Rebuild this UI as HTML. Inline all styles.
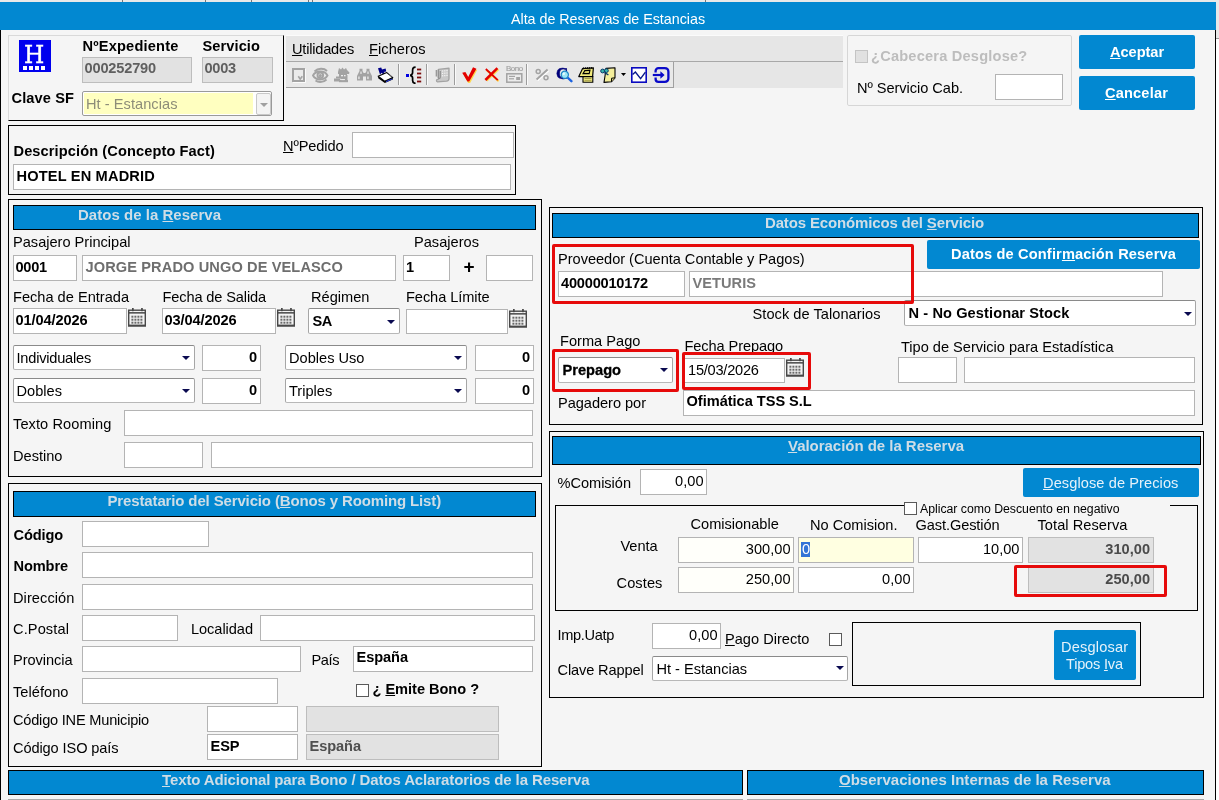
<!DOCTYPE html>
<html lang="es"><head><meta charset="utf-8"><title>Alta de Reservas de Estancias</title>
<style>
html,body{margin:0;padding:0}
body{width:1219px;height:800px;overflow:hidden;background:#f5f5f5;position:relative;font-family:"Liberation Sans",sans-serif;font-size:14.6px}
#w{position:absolute;left:0;top:0;width:1219px;height:800px;overflow:hidden;will-change:transform}
#w div,#w svg,#w span.t{position:absolute;box-sizing:border-box}
span.t{white-space:pre;line-height:20px;height:20px}
u{text-decoration:underline;text-underline-offset:0.6px;text-decoration-thickness:1px}
.in{background:#fff;border:1px solid #b4b4b4}
.dis{background:#e2e2e2;border-color:#bdbdbd}
.cb{border-color:#8a8a8a #a6a6a6 #b8b8b8 #a6a6a6;border-radius:2px}
</style></head><body>

<div id="w">
<div style="left:0px;top:0px;width:1219px;height:2px;background:#e9e9e9"></div>
<div style="left:122px;top:0px;width:1px;height:2px;background:#777"></div>
<div style="left:205px;top:0px;width:1px;height:2px;background:#777"></div>
<div style="left:251px;top:0px;width:1px;height:2px;background:#777"></div>
<div style="left:308px;top:0px;width:1px;height:2px;background:#777"></div>
<div style="left:312px;top:0px;width:1px;height:2px;background:#777"></div>
<div style="left:705px;top:0px;width:1px;height:2px;background:#777"></div>
<div style="left:0px;top:2px;width:1216px;height:28px;background:#0288d1"></div>
<div style="left:1216px;top:2px;width:3px;height:36px;background:#e8e8e8"></div>
<div style="left:1216px;top:38px;width:3px;height:762px;background:#fff"></div>
<div style="left:1216px;top:38px;width:3px;height:1px;background:#9a9a9a"></div>
<div style="left:0px;top:30px;width:1px;height:770px;background:#000"></div>
<div style="left:1215px;top:30px;width:1px;height:770px;background:#000"></div>
<div style="left:8px;top:35px;width:276px;height:86px;border:1px solid #d9d9d9;border-right-color:#000;border-bottom-color:#000"></div>
<div style="left:19px;top:40px;width:32px;height:32px;background:#0000ee"></div>
<div style="left:23px;top:66px;width:4px;height:4px;background:#fff"></div>
<div style="left:29px;top:66px;width:4px;height:4px;background:#fff"></div>
<div style="left:35px;top:66px;width:4px;height:4px;background:#fff"></div>
<div style="left:41px;top:66px;width:4px;height:4px;background:#fff"></div>
<div class="in dis" style="left:82px;top:57px;width:110px;height:26px"></div>
<div class="in dis" style="left:202px;top:57px;width:71px;height:26px"></div>
<div style="left:82px;top:91px;width:190px;height:25px;background:#fff;border:1px solid #9a9a9a;border-radius:2px"></div>
<div style="left:84px;top:93px;width:169px;height:21px;background:#ffffc0"></div>
<div style="left:256px;top:93px;width:15px;height:22px;background:#f4f4f4;border:1px solid #c8c8c8;border-radius:2px"></div>
<svg style="left:260px;top:103px" width="8" height="4" viewBox="0 0 8 4"><path d="M0 0H8L4 4Z" fill="#a0a0a0"/></svg>
<div style="left:286px;top:35px;width:557px;height:53px;background:#e6e6e6"></div>
<div style="left:286px;top:35px;width:557px;height:1px;background:#fbfbfb"></div>
<div style="left:286px;top:61px;width:557px;height:1px;background:#a8a8a8"></div>
<div style="left:286px;top:62px;width:388px;height:26px;background:#e9e9e9;border-right:1px solid #a0a0a0;border-bottom:1px solid #a0a0a0"></div>
<svg style="left:292px;top:68px" width="14" height="15" viewBox="0 0 14 15"><rect x="1.9" y="1.9" width="11" height="12" fill="#ebebeb" stroke="#ffffff" stroke-width="1.8"/><rect x="1" y="1" width="11" height="12" fill="#ebebeb" stroke="#a3a3a3" stroke-width="2"/><path d="M6.3 8.3L8.2 11.2L10.3 8.3" stroke="#a3a3a3" stroke-width="1.6" fill="none"/></svg>
<svg style="left:312px;top:67px" width="17" height="16" viewBox="0 0 17 16"><g fill="none" stroke="#a3a3a3" stroke-width="1.9"><path d="M1 8.5C3.5 3.5 12.5 3 15.5 8.5C12.5 13.5 4 14 1 8.5Z"/><path d="M2.5 4.5C6 1 12 1 15 4"/><path d="M3.5 13.5C7 16 12 15 14.5 12.5"/><circle cx="8.3" cy="8.3" r="2.8"/></g><circle cx="8.3" cy="8.6" r="1.6" fill="#a3a3a3"/></svg>
<svg style="left:334px;top:67px" width="17" height="16" viewBox="0 0 17 16"><g fill="#a3a3a3"><path d="M4 5L5 1L7 2.5L8.5 0.5L10 2.5L12 1L13 3L15.5 5.5L15 7H4Z"/><rect x="5" y="7" width="8" height="3" /><rect x="2" y="9.5" width="9" height="2"/><rect x="0" y="11.5" width="6" height="3"/><rect x="5" y="13" width="9" height="2.2"/><rect x="11" y="8" width="2.5" height="7"/><rect x="6.5" y="10.8" width="5" height="1.4"/></g><rect x="7" y="8" width="2" height="1.3" fill="#eee"/><rect x="10" y="8" width="1.6" height="1.3" fill="#eee"/><rect x="7.3" y="12.1" width="3.4" height="1" fill="#eee"/></svg>
<svg style="left:357px;top:68px" width="15" height="13" viewBox="0 0 15 13"><g fill="#a3a3a3"><path d="M0 12.5V8L2.5 3V0.8H5.5V3L6.6 5H8.4L9.5 3V0.8H12.5V3L15 8V12.5H9V8.5H6V12.5Z"/></g><g fill="#ececec"><rect x="1.3" y="8.5" width="1.3" height="2.6"/><rect x="10.3" y="8.5" width="1.3" height="2.6"/><rect x="3.4" y="3.5" width="1.2" height="2.4"/><rect x="10.4" y="3.5" width="1.2" height="2.4"/></g></svg>
<svg style="left:377px;top:67px" width="17" height="16" viewBox="0 0 17 16"><path d="M1 1.2L4.2 0.6L5 2.4L8.6 1.4L9.3 4.4L6.6 5L10.5 8.3L8.4 9.3L4.6 5.7L3 7.4Z" fill="#00008a"/><path d="M1.2 9.2L9.8 5.6L15.8 10.6L7.6 14.2Z" fill="#fff" stroke="#000" stroke-width="1.1" stroke-linejoin="round"/><path d="M1.2 9.2L7.6 14.2L15.8 10.6V12.6L7.8 16L1.2 11.2Z" fill="#000"/><path d="M9 14.1L15.3 11.4V12.5L9 15.2Z" fill="#2a3fd8"/><path d="M12.3 7.8L14.6 9.8" stroke="#888" stroke-width="1"/></svg>
<div style="left:398px;top:64px;width:1px;height:21px;background:#9c9c9c"></div><div style="left:399px;top:64px;width:1px;height:21px;background:#fafafa"></div>
<svg style="left:405px;top:66px" width="18" height="18" viewBox="0 0 18 18"><rect x="1" y="8" width="3" height="3" fill="#0000e0"/><path d="M10.6 1.2C8 1.2 7.6 2.6 7.6 4.4V6.6C7.6 8 7 8.9 5.2 9.3C7 9.7 7.6 10.6 7.6 12V14.4C7.6 16.1 8 17.3 10.6 17.3" fill="none" stroke="#000" stroke-width="1.7"/><g fill="#7a0c0c"><rect x="12" y="2.6" width="4.2" height="1.8"/><rect x="12" y="6.6" width="4.2" height="1.8"/><rect x="12" y="10.6" width="4.2" height="1.8"/><rect x="12" y="14.6" width="4.2" height="1.8"/></g></svg>
<div style="left:426px;top:64px;width:1px;height:21px;background:#9c9c9c"></div><div style="left:427px;top:64px;width:1px;height:21px;background:#fafafa"></div>
<svg style="left:435px;top:67px" width="16" height="16" viewBox="0 0 16 16"><path d="M3.5 2.4L14 1.2V11.5C14 13 13 14 11.5 14.2L2.5 14.8C1 14.5 1.2 12.5 2.6 12.4L3.5 12.2Z" fill="#c9c9c9" stroke="#a3a3a3" stroke-width="1.3" stroke-linejoin="round"/><path d="M1.3 3V9.5M3.2 2.6V10.2C3.2 11.8 5.3 11.8 5.3 10.2V4" fill="none" stroke="#8f8f8f" stroke-width="1.2"/><g fill="#f4f4f4"><rect x="7" y="3.4" width="1.2" height="1.2"/><rect x="9.2" y="3.2" width="1.2" height="1.2"/><rect x="11.4" y="3" width="1.2" height="1.2"/><rect x="7" y="5.8" width="1.2" height="1.2"/><rect x="9.2" y="5.6" width="1.2" height="1.2"/><rect x="11.4" y="5.4" width="1.2" height="1.2"/><rect x="7" y="8.2" width="1.2" height="1.2"/><rect x="9.2" y="8" width="1.2" height="1.2"/><rect x="11.4" y="7.8" width="1.2" height="1.2"/></g></svg>
<div style="left:454px;top:64px;width:1px;height:21px;background:#9c9c9c"></div><div style="left:455px;top:64px;width:1px;height:21px;background:#fafafa"></div>
<svg style="left:461px;top:66px" width="17" height="17" viewBox="0 0 17 17"><path d="M1.8 7.2L4.6 6.6L7.4 11.8L12.2 1.6L15.6 3.4L8.6 16.2H6.6Z" fill="#ffd84a" transform="translate(0.5,0.7)"/><path d="M1.2 6.8L4.4 6L7.2 11L12 1.2L15.4 2.8L8.2 15.6H6.4Z" fill="#e30000"/></svg>
<svg style="left:484px;top:67px" width="16" height="15" viewBox="0 0 16 15"><path d="M2 13.2L13.8 1.6M2.2 2.6L14 13.6" stroke="#ffd84a" stroke-width="2" transform="translate(0.6,0.6)"/><path d="M1.4 13L13.4 1.2" stroke="#e30000" stroke-width="2.5"/><path d="M1.8 2L13.8 13.2" stroke="#e30000" stroke-width="1.8"/></svg>
<span class="t" style="left:506px;top:64px;font-size:8px;letter-spacing:-0.5px;line-height:10px;height:10px;color:#a3a3a3;-webkit-text-stroke:0.2px #a3a3a3">Bono</span>
<svg style="left:506px;top:73px" width="17" height="10" viewBox="0 0 17 10"><rect x="0.8" y="0.8" width="15" height="8.4" fill="#ebebeb" stroke="#a3a3a3" stroke-width="1.5"/><rect x="3" y="2.8" width="6" height="1.2" fill="#a3a3a3"/><rect x="3" y="5.2" width="5" height="1.2" fill="#a3a3a3"/><rect x="10.2" y="4" width="3.8" height="3" fill="#a3a3a3"/></svg>
<div style="left:526px;top:64px;width:1px;height:21px;background:#9c9c9c"></div><div style="left:527px;top:64px;width:1px;height:21px;background:#fafafa"></div>
<svg style="left:535px;top:68px" width="15" height="13" viewBox="0 0 15 13"><path d="M1.6 11.6L12.6 1.6" stroke="#fff" stroke-width="2" transform="translate(0.8,0.8)"/><path d="M1.6 11.6L12.6 1.6" stroke="#a3a3a3" stroke-width="2"/><circle cx="3.2" cy="3.4" r="2" fill="none" stroke="#a3a3a3" stroke-width="1.5"/><circle cx="11" cy="9.8" r="2" fill="none" stroke="#a3a3a3" stroke-width="1.5"/></svg>
<span class="t" style="left:556px;top:64px;font-family:'Liberation Serif',serif;font-weight:bold;font-size:17px;line-height:20px;height:20px;color:#00007a;-webkit-text-stroke:0.5px #00007a">C</span>
<svg style="left:560px;top:70px" width="13" height="13" viewBox="0 0 13 13"><path d="M7 7L11.4 11.2" stroke="#1d63e0" stroke-width="2.4" stroke-linecap="round"/><circle cx="4.8" cy="4.8" r="3.6" fill="#9fe6f4" stroke="#1a86c8" stroke-width="1.2"/><circle cx="3.8" cy="3.8" r="1.2" fill="#e8fbff"/></svg>
<svg style="left:578px;top:67px" width="17" height="16" viewBox="0 0 17 16"><path d="M5 15.3V9.5H14.8V15.3Z" fill="#f4ee86" stroke="#000" stroke-width="1.1"/><path d="M6.5 11.5H13.5M6.5 13.3H13.5" stroke="#9a9440" stroke-width="0.9"/><path d="M4.6 1.6L15.4 0.8L14.6 9.6H0.8Z" fill="#f1ea7c" stroke="#000" stroke-width="1.2" stroke-linejoin="round"/><path d="M5.4 0.3V2.2M7.4 0.2V2M9.4 0.1V1.9M11.4 0V1.8M13.4 0V1.7" stroke="#000" stroke-width="0.9"/><path d="M6.8 3.6L12 3.2L11.2 6.6H5Z" fill="#d8d06a" stroke="#000" stroke-width="1.1"/></svg>
<svg style="left:600px;top:67px" width="17" height="16" viewBox="0 0 17 16"><path d="M6 1.4L15 0.8V10.8L11.4 14.8L4 15.4L5 9Z" fill="#f4ee9a" stroke="#000" stroke-width="1.1" stroke-linejoin="round"/><path d="M15 10.8L11.6 11.2L11.4 14.8" fill="#d9d27a" stroke="#000" stroke-width="1"/><circle cx="2.6" cy="4" r="1.9" fill="#39b8b0" stroke="#0a3a6a" stroke-width="1"/><circle cx="6.4" cy="3.6" r="1.9" fill="#39b8b0" stroke="#0a3a6a" stroke-width="1"/><path d="M4.4 5.4L8.4 8" stroke="#0a3a6a" stroke-width="1.4"/></svg>
<svg style="left:621px;top:73px" width="5" height="3" viewBox="0 0 5 3"><path d="M0 0H5L2.5 3Z" fill="#000"/></svg>
<svg style="left:631px;top:67px" width="16" height="16" viewBox="0 0 16 16"><rect x="0.8" y="0.8" width="14.4" height="14.4" fill="#fff" stroke="#0a0ac0" stroke-width="1.6"/><path d="M1.6 7.6L4.4 5L9.6 11.6L14.4 5.2" fill="none" stroke="#0a1a8a" stroke-width="1.4"/></svg>
<svg style="left:652px;top:67px" width="18" height="16" viewBox="0 0 18 16"><path d="M3.6 5.4V4C3.6 2.3 4.8 1.2 6.4 1.2H12.6C14.8 1.2 16.4 2.6 16.4 4.8V11.2C16.4 13.4 14.8 14.8 12.6 14.8H6.4C4.8 14.8 3.6 13.7 3.6 12V10.6" fill="none" stroke="#0a0ac8" stroke-width="2.3"/><path d="M0.8 8H11" stroke="#0a0ac8" stroke-width="2.2"/><path d="M8.4 4.2L12.6 8L8.4 11.8Z" fill="#0a0ac8"/></svg>
<div style="left:847px;top:35px;width:225px;height:71px;border:1px solid #d6d6d6;border-radius:2px"></div>
<div style="left:855px;top:50px;width:13px;height:13px;background:#e1e1e1;border:1px solid #c4c4c4"></div>
<div class="in" style="left:995px;top:74px;width:68px;height:26px"></div>
<div style="left:1079px;top:35px;width:116px;height:34px;background:#0288d1;border-radius:2px"></div>
<div style="left:1079px;top:76px;width:116px;height:34px;background:#0288d1;border-radius:2px"></div>
<div style="left:8px;top:125px;width:508px;height:70px;border:1px solid #000"></div>
<div class="in" style="left:352px;top:132px;width:162px;height:26px"></div>
<div class="in" style="left:13px;top:164px;width:498px;height:26px"></div>
<div style="left:8px;top:199px;width:534px;height:278px;border:1px solid #000"></div>
<div style="left:13px;top:205px;width:523px;height:25px;background:#0288d1;border:1px solid #000"></div>
<div class="in" style="left:13px;top:255px;width:64px;height:26px"></div>
<div class="in" style="left:82px;top:255px;width:314px;height:26px"></div>
<div class="in" style="left:403px;top:255px;width:47px;height:26px"></div>
<div class="in" style="left:486px;top:255px;width:47px;height:26px"></div>
<div class="in" style="left:13px;top:308px;width:114px;height:26px"></div>
<svg style="left:128px;top:308px" width="18" height="19" viewBox="0 0 18 19"><rect x="0.7" y="2.2" width="16.6" height="15.6" fill="#f4f4f4" stroke="#484848" stroke-width="1.4"/><rect x="1" y="4.1" width="16" height="1.5" fill="#484848"/><rect x="0" y="16.6" width="18" height="1.9" fill="#484848"/><rect x="4" y="0" width="1.7" height="3.2" fill="#484848"/><rect x="13.1" y="0" width="1.7" height="3.2" fill="#484848"/><g fill="#6a6a6a"><rect x="3.4" y="7.7" width="2" height="2"/><rect x="6.4" y="7.7" width="2" height="2"/><rect x="9.4" y="7.7" width="2" height="2"/><rect x="12.4" y="7.7" width="2" height="2"/><rect x="3.4" y="10.7" width="2" height="2"/><rect x="6.4" y="10.7" width="2" height="2"/><rect x="9.4" y="10.7" width="2" height="2"/><rect x="12.4" y="10.7" width="2" height="2"/><rect x="3.4" y="13.7" width="2" height="2"/><rect x="6.4" y="13.7" width="2" height="2"/><rect x="9.4" y="13.7" width="2" height="2"/><rect x="12.4" y="13.7" width="2" height="2"/></g></svg>
<div class="in" style="left:162px;top:308px;width:114px;height:26px"></div>
<svg style="left:277px;top:308px" width="18" height="19" viewBox="0 0 18 19"><rect x="0.7" y="2.2" width="16.6" height="15.6" fill="#f4f4f4" stroke="#484848" stroke-width="1.4"/><rect x="1" y="4.1" width="16" height="1.5" fill="#484848"/><rect x="0" y="16.6" width="18" height="1.9" fill="#484848"/><rect x="4" y="0" width="1.7" height="3.2" fill="#484848"/><rect x="13.1" y="0" width="1.7" height="3.2" fill="#484848"/><g fill="#6a6a6a"><rect x="3.4" y="7.7" width="2" height="2"/><rect x="6.4" y="7.7" width="2" height="2"/><rect x="9.4" y="7.7" width="2" height="2"/><rect x="12.4" y="7.7" width="2" height="2"/><rect x="3.4" y="10.7" width="2" height="2"/><rect x="6.4" y="10.7" width="2" height="2"/><rect x="9.4" y="10.7" width="2" height="2"/><rect x="12.4" y="10.7" width="2" height="2"/><rect x="3.4" y="13.7" width="2" height="2"/><rect x="6.4" y="13.7" width="2" height="2"/><rect x="9.4" y="13.7" width="2" height="2"/><rect x="12.4" y="13.7" width="2" height="2"/></g></svg>
<div class="in cb" style="left:308px;top:308px;width:92px;height:26px"></div>
<svg style="left:387px;top:320px" width="8" height="4" viewBox="0 0 8 4"><path d="M0 0H8L4 4Z" fill="#0a0a50"/></svg>
<div class="in" style="left:406px;top:309px;width:102px;height:25px"></div>
<svg style="left:509px;top:309px" width="18" height="19" viewBox="0 0 18 19"><rect x="0.7" y="2.2" width="16.6" height="15.6" fill="#f4f4f4" stroke="#484848" stroke-width="1.4"/><rect x="1" y="4.1" width="16" height="1.5" fill="#484848"/><rect x="0" y="16.6" width="18" height="1.9" fill="#484848"/><rect x="4" y="0" width="1.7" height="3.2" fill="#484848"/><rect x="13.1" y="0" width="1.7" height="3.2" fill="#484848"/><g fill="#6a6a6a"><rect x="3.4" y="7.7" width="2" height="2"/><rect x="6.4" y="7.7" width="2" height="2"/><rect x="9.4" y="7.7" width="2" height="2"/><rect x="12.4" y="7.7" width="2" height="2"/><rect x="3.4" y="10.7" width="2" height="2"/><rect x="6.4" y="10.7" width="2" height="2"/><rect x="9.4" y="10.7" width="2" height="2"/><rect x="12.4" y="10.7" width="2" height="2"/><rect x="3.4" y="13.7" width="2" height="2"/><rect x="6.4" y="13.7" width="2" height="2"/><rect x="9.4" y="13.7" width="2" height="2"/><rect x="12.4" y="13.7" width="2" height="2"/></g></svg>
<div class="in cb" style="left:13px;top:345px;width:182px;height:25px"></div>
<svg style="left:182px;top:356px" width="8" height="4" viewBox="0 0 8 4"><path d="M0 0H8L4 4Z" fill="#0a0a50"/></svg>
<div class="in" style="left:202px;top:345px;width:59px;height:26px"></div>
<div class="in cb" style="left:285px;top:345px;width:182px;height:25px"></div>
<svg style="left:454px;top:356px" width="8" height="4" viewBox="0 0 8 4"><path d="M0 0H8L4 4Z" fill="#0a0a50"/></svg>
<div class="in" style="left:475px;top:345px;width:59px;height:26px"></div>
<div class="in cb" style="left:13px;top:378px;width:182px;height:25px"></div>
<svg style="left:182px;top:389px" width="8" height="4" viewBox="0 0 8 4"><path d="M0 0H8L4 4Z" fill="#0a0a50"/></svg>
<div class="in" style="left:202px;top:378px;width:59px;height:26px"></div>
<div class="in cb" style="left:285px;top:378px;width:182px;height:25px"></div>
<svg style="left:454px;top:389px" width="8" height="4" viewBox="0 0 8 4"><path d="M0 0H8L4 4Z" fill="#0a0a50"/></svg>
<div class="in" style="left:475px;top:378px;width:59px;height:26px"></div>
<div class="in" style="left:124px;top:410px;width:409px;height:26px"></div>
<div class="in" style="left:124px;top:442px;width:79px;height:26px"></div>
<div class="in" style="left:211px;top:442px;width:322px;height:26px"></div>
<div style="left:8px;top:483px;width:534px;height:284px;border:1px solid #000"></div>
<div style="left:13px;top:491px;width:523px;height:26px;background:#0288d1;border:1px solid #000"></div>
<div class="in" style="left:82px;top:521px;width:127px;height:26px"></div>
<div class="in" style="left:82px;top:552px;width:451px;height:26px"></div>
<div class="in" style="left:82px;top:584px;width:451px;height:26px"></div>
<div class="in" style="left:82px;top:615px;width:96px;height:26px"></div>
<div class="in" style="left:260px;top:615px;width:275px;height:26px"></div>
<div class="in" style="left:82px;top:646px;width:219px;height:26px"></div>
<div class="in" style="left:353px;top:646px;width:180px;height:26px"></div>
<div class="in" style="left:82px;top:678px;width:196px;height:26px"></div>
<div style="left:356px;top:684px;width:13px;height:13px;background:#fff;border:1px solid #5a5a5a"></div>
<div class="in" style="left:207px;top:706px;width:91px;height:26px"></div>
<div class="in dis" style="left:306px;top:706px;width:193px;height:26px"></div>
<div class="in" style="left:207px;top:734px;width:91px;height:26px"></div>
<div class="in dis" style="left:306px;top:734px;width:193px;height:26px"></div>
<div style="left:8px;top:770px;width:735px;height:25px;background:#0288d1;border:1px solid #000"></div>
<div style="left:747px;top:770px;width:457px;height:25px;background:#0288d1;border:1px solid #000"></div>
<div style="left:8px;top:799px;width:735px;height:2px;background:#fff;border:1px solid #a9a9a9;border-bottom:0"></div>
<div style="left:747px;top:799px;width:457px;height:2px;background:#fff;border:1px solid #a9a9a9;border-bottom:0"></div>
<div style="left:549px;top:207px;width:654px;height:218px;border:1px solid #000"></div>
<div style="left:552px;top:213px;width:647px;height:25px;background:#0288d1;border:1px solid #000"></div>
<div class="in" style="left:558px;top:271px;width:127px;height:26px"></div>
<div class="in" style="left:689px;top:271px;width:474px;height:26px"></div>
<div style="left:927px;top:240px;width:273px;height:29px;background:#0288d1;border-radius:2px"></div>
<div class="in cb" style="left:904px;top:300px;width:292px;height:26px"></div>
<svg style="left:1184px;top:312px" width="8" height="4" viewBox="0 0 8 4"><path d="M0 0H8L4 4Z" fill="#0a0a50"/></svg>
<div class="in cb" style="left:558px;top:357px;width:115px;height:26px"></div>
<svg style="left:660px;top:368px" width="8" height="4" viewBox="0 0 8 4"><path d="M0 0H8L4 4Z" fill="#0a0a50"/></svg>
<div class="in" style="left:684px;top:358px;width:101px;height:25px"></div>
<svg style="left:786px;top:358px" width="18" height="19" viewBox="0 0 18 19"><rect x="0.7" y="2.2" width="16.6" height="15.6" fill="#f4f4f4" stroke="#484848" stroke-width="1.4"/><rect x="1" y="4.1" width="16" height="1.5" fill="#484848"/><rect x="0" y="16.6" width="18" height="1.9" fill="#484848"/><rect x="4" y="0" width="1.7" height="3.2" fill="#484848"/><rect x="13.1" y="0" width="1.7" height="3.2" fill="#484848"/><g fill="#6a6a6a"><rect x="3.4" y="7.7" width="2" height="2"/><rect x="6.4" y="7.7" width="2" height="2"/><rect x="9.4" y="7.7" width="2" height="2"/><rect x="12.4" y="7.7" width="2" height="2"/><rect x="3.4" y="10.7" width="2" height="2"/><rect x="6.4" y="10.7" width="2" height="2"/><rect x="9.4" y="10.7" width="2" height="2"/><rect x="12.4" y="10.7" width="2" height="2"/><rect x="3.4" y="13.7" width="2" height="2"/><rect x="6.4" y="13.7" width="2" height="2"/><rect x="9.4" y="13.7" width="2" height="2"/><rect x="12.4" y="13.7" width="2" height="2"/></g></svg>
<div class="in" style="left:898px;top:357px;width:59px;height:26px"></div>
<div class="in" style="left:964px;top:357px;width:231px;height:26px"></div>
<div class="in" style="left:683px;top:390px;width:512px;height:26px"></div>
<div style="left:552px;top:244px;width:362px;height:60px;border:3px solid #e60a0a;border-radius:2px;z-index:5"></div>
<div style="left:552px;top:349px;width:127px;height:43px;border:3px solid #e60a0a;border-radius:2px;z-index:5"></div>
<div style="left:682px;top:352px;width:129px;height:38px;border:3px solid #e60a0a;border-radius:2px;z-index:5"></div>
<div style="left:549px;top:431px;width:655px;height:267px;border:1px solid #000"></div>
<div style="left:552px;top:436px;width:649px;height:29px;background:#0288d1;border:1px solid #000"></div>
<div class="in" style="left:640px;top:469px;width:67px;height:26px"></div>
<div style="left:1023px;top:468px;width:176px;height:29px;background:#0288d1;border-radius:2px"></div>
<div style="left:555px;top:505px;width:643px;height:106px;border:1px solid #000"></div>
<div style="left:904px;top:503px;width:266px;height:14px;background:#f5f5f5"></div>
<div style="left:904px;top:502px;width:13px;height:13px;background:#fff;border:1px solid #5a5a5a"></div>
<div class="in" style="left:678px;top:537px;width:116px;height:26px"></div>
<div style="left:679px;top:538px;width:114px;height:24px;background:#fffffa"></div>
<div class="in" style="left:798px;top:537px;width:116px;height:26px"></div>
<div style="left:799px;top:538px;width:114px;height:24px;background:#ffffe1"></div>
<div style="left:801px;top:542px;width:9px;height:15px;background:#3374d6"></div>
<div class="in" style="left:918px;top:537px;width:105px;height:26px"></div>
<div class="in dis" style="left:1028px;top:537px;width:126px;height:26px"></div>
<div class="in" style="left:678px;top:567px;width:116px;height:26px"></div>
<div style="left:679px;top:568px;width:114px;height:24px;background:#fffffa"></div>
<div class="in" style="left:798px;top:567px;width:116px;height:26px"></div>
<div class="in dis" style="left:1028px;top:567px;width:126px;height:26px"></div>
<div style="left:1014px;top:565px;width:153px;height:32px;border:3px solid #e60a0a;border-radius:2px;z-index:5"></div>
<div class="in" style="left:652px;top:623px;width:69px;height:26px"></div>
<div style="left:829px;top:633px;width:13px;height:13px;background:#fff;border:1px solid #5a5a5a"></div>
<div class="in cb" style="left:652px;top:656px;width:196px;height:25px"></div>
<svg style="left:836px;top:666px" width="8" height="4" viewBox="0 0 8 4"><path d="M0 0H8L4 4Z" fill="#0a0a50"/></svg>
<div style="left:852px;top:622px;width:289px;height:64px;border:1px solid #000"></div>
<div style="left:1054px;top:630px;width:82px;height:50px;background:#0288d1;border-radius:2px"></div>
<span class="t" style="top:9.00px;font-size:14.3px;color:#fff;letter-spacing:-0.024px;left:511.00px;">Alta de Reservas de Estancias</span>
<span class="t" style="top:45.00px;font-size:25px;color:#fff;left:24.00px;font-family:'DejaVu Serif',serif;transform:scaleX(0.93);transform-origin:0 0;-webkit-text-stroke:0.45px #fff;">H</span>
<span class="t" style="top:36.00px;font-size:14.6px;color:#000;font-weight:bold;letter-spacing:0.189px;left:82.50px;">NºExpediente</span>
<span class="t" style="top:36.00px;font-size:14.6px;color:#000;font-weight:bold;letter-spacing:0.088px;left:202.50px;">Servicio</span>
<span class="t" style="top:58.00px;font-size:14.6px;color:#5f5f5f;font-weight:bold;letter-spacing:-0.174px;left:84.50px;">000252790</span>
<span class="t" style="top:58.00px;font-size:14.6px;color:#5f5f5f;font-weight:bold;letter-spacing:-0.242px;left:204.50px;">0003</span>
<span class="t" style="top:88.00px;font-size:14.6px;color:#000;font-weight:bold;letter-spacing:0.105px;left:11.50px;">Clave SF</span>
<span class="t" style="top:94.00px;font-size:14.6px;color:#8d8d78;letter-spacing:0.047px;left:86.00px;">Ht - Estancias</span>
<span class="t" style="top:39.00px;font-size:14.6px;color:#000;letter-spacing:-0.209px;left:292.00px;"><u>U</u>tilidades</span>
<span class="t" style="top:39.00px;font-size:14.6px;color:#000;letter-spacing:0.066px;left:369.00px;"><u>F</u>icheros</span>
<span class="t" style="top:46.00px;font-size:14.6px;color:#bdbdbd;font-weight:bold;letter-spacing:0.211px;left:871.00px;">¿Cabecera Desglose?</span>
<span class="t" style="top:78.00px;font-size:14.6px;color:#000;letter-spacing:-0.045px;left:857.00px;">Nº Servicio Cab.</span>
<span class="t" style="top:42.00px;font-size:14.6px;color:#fff;font-weight:bold;letter-spacing:-0.049px;left:1110.00px;"><u>A</u>ceptar</span>
<span class="t" style="top:83.00px;font-size:14.6px;color:#fff;font-weight:bold;letter-spacing:0.168px;left:1105.00px;"><u>C</u>ancelar</span>
<span class="t" style="top:141.00px;font-size:14.6px;color:#000;font-weight:bold;letter-spacing:0.105px;left:13.50px;">Descripción (Concepto Fact)</span>
<span class="t" style="top:136.00px;font-size:14.6px;color:#000;letter-spacing:-0.102px;left:283.00px;"><u>N</u>ºPedido</span>
<span class="t" style="top:166.00px;font-size:14.6px;color:#000;font-weight:bold;letter-spacing:0.170px;left:16.50px;">HOTEL EN MADRID</span>
<span class="t" style="top:205.00px;font-size:15px;color:#cfdde6;font-weight:bold;letter-spacing:0.022px;left:78.00px;">Datos de la <u>R</u>eserva</span>
<span class="t" style="top:232.00px;font-size:14.6px;color:#000;letter-spacing:-0.007px;left:13.00px;">Pasajero Principal</span>
<span class="t" style="top:232.00px;font-size:14.6px;color:#000;letter-spacing:0.010px;left:414.00px;">Pasajeros</span>
<span class="t" style="top:257.00px;font-size:14.6px;color:#000;font-weight:bold;letter-spacing:-0.242px;left:15.50px;">0001</span>
<span class="t" style="top:257.00px;font-size:14.6px;color:#6e6e6e;font-weight:bold;letter-spacing:0.106px;left:85.50px;">JORGE PRADO UNGO DE VELASCO</span>
<span class="t" style="top:257.00px;font-size:14.6px;color:#000;font-weight:bold;left:406.00px;">1</span>
<span class="t" style="top:257.00px;font-size:19px;color:#000;font-weight:bold;left:463.50px;">+</span>
<span class="t" style="top:287.00px;font-size:14.6px;color:#000;left:13.00px;">Fecha de Entrada</span>
<span class="t" style="top:287.00px;font-size:14.6px;color:#000;letter-spacing:-0.132px;left:162.50px;">Fecha de Salida</span>
<span class="t" style="top:287.00px;font-size:14.6px;color:#000;letter-spacing:0.013px;left:311.00px;">Régimen</span>
<span class="t" style="top:287.00px;font-size:14.6px;color:#000;letter-spacing:-0.072px;left:406.00px;">Fecha Límite</span>
<span class="t" style="top:310.00px;font-size:14.6px;color:#000;font-weight:bold;letter-spacing:-0.105px;left:15.50px;">01/04/2026</span>
<span class="t" style="top:310.00px;font-size:14.6px;color:#000;font-weight:bold;letter-spacing:-0.105px;left:164.50px;">03/04/2026</span>
<span class="t" style="top:311.00px;font-size:14.6px;color:#000;font-weight:bold;letter-spacing:-0.600px;left:312.50px;">SA</span>
<span class="t" style="top:347.00px;font-size:14.6px;color:#000;font-weight:bold;right:962.00px;">0</span>
<span class="t" style="top:347.00px;font-size:14.6px;color:#000;font-weight:bold;right:689.00px;">0</span>
<span class="t" style="top:348.00px;font-size:14.6px;color:#000;letter-spacing:-0.215px;left:16.50px;">Individuales</span>
<span class="t" style="top:348.00px;font-size:14.6px;color:#000;left:289.00px;">Dobles Uso</span>
<span class="t" style="top:380.00px;font-size:14.6px;color:#000;font-weight:bold;right:962.00px;">0</span>
<span class="t" style="top:380.00px;font-size:14.6px;color:#000;font-weight:bold;right:689.00px;">0</span>
<span class="t" style="top:381.00px;font-size:14.6px;color:#000;left:16.50px;">Dobles</span>
<span class="t" style="top:381.00px;font-size:14.6px;color:#000;left:289.00px;">Triples</span>
<span class="t" style="top:414.00px;font-size:14.6px;color:#000;letter-spacing:0.089px;left:13.00px;">Texto Rooming</span>
<span class="t" style="top:446.00px;font-size:14.6px;color:#000;left:13.00px;">Destino</span>
<span class="t" style="top:491.00px;font-size:15px;color:#cfdde6;font-weight:bold;letter-spacing:-0.140px;left:107.50px;">Prestatario del Servicio (<u>B</u>onos y Rooming List)</span>
<span class="t" style="top:525.00px;font-size:14.6px;color:#000;font-weight:bold;letter-spacing:-0.128px;left:13.50px;">Código</span>
<span class="t" style="top:556.00px;font-size:14.6px;color:#000;font-weight:bold;letter-spacing:-0.107px;left:13.50px;">Nombre</span>
<span class="t" style="top:588.00px;font-size:14.6px;color:#000;letter-spacing:0.075px;left:13.00px;">Dirección</span>
<span class="t" style="top:619.00px;font-size:14.6px;color:#000;letter-spacing:0.105px;left:13.00px;">C.Postal</span>
<span class="t" style="top:619.00px;font-size:14.6px;color:#000;letter-spacing:-0.054px;left:191.00px;">Localidad</span>
<span class="t" style="top:650.00px;font-size:14.6px;color:#000;letter-spacing:-0.059px;left:13.00px;">Provincia</span>
<span class="t" style="top:650.00px;font-size:14.6px;color:#000;letter-spacing:-0.426px;left:311.50px;">País</span>
<span class="t" style="top:647.00px;font-size:14.6px;color:#000;font-weight:bold;letter-spacing:-0.070px;left:356.50px;">España</span>
<span class="t" style="top:682.00px;font-size:14.6px;color:#000;letter-spacing:0.039px;left:13.00px;">Teléfono</span>
<span class="t" style="top:679.00px;font-size:14.6px;color:#000;font-weight:bold;letter-spacing:-0.038px;left:372.50px;">¿ <u>E</u>mite Bono ?</span>
<span class="t" style="top:710.00px;font-size:14.6px;color:#000;letter-spacing:-0.217px;left:13.00px;">Código INE Municipio</span>
<span class="t" style="top:738.00px;font-size:14.6px;color:#000;letter-spacing:-0.106px;left:13.00px;">Código ISO país</span>
<span class="t" style="top:736.00px;font-size:14.6px;color:#000;font-weight:bold;letter-spacing:-0.068px;left:210.50px;">ESP</span>
<span class="t" style="top:736.00px;font-size:14.6px;color:#4f4f4f;font-weight:bold;letter-spacing:-0.070px;left:309.50px;">España</span>
<span class="t" style="top:770.00px;font-size:15px;color:#cfdde6;font-weight:bold;letter-spacing:-0.118px;left:162.00px;"><u>T</u>exto Adicional para Bono / Datos Aclaratorios de la Reserva</span>
<span class="t" style="top:770.00px;font-size:15px;color:#cfdde6;font-weight:bold;letter-spacing:0.020px;left:839.00px;"><u>O</u>bservaciones Internas de la Reserva</span>
<span class="t" style="top:213.00px;font-size:15px;color:#cfdde6;font-weight:bold;letter-spacing:-0.152px;left:765.00px;">Datos Económicos del <u>S</u>ervicio</span>
<span class="t" style="top:249.00px;font-size:14.6px;color:#000;letter-spacing:-0.027px;left:558.00px;">Proveedor (Cuenta Contable y Pagos)</span>
<span class="t" style="top:273.00px;font-size:14.6px;color:#000;font-weight:bold;letter-spacing:-0.207px;left:561.00px;">40000010172</span>
<span class="t" style="top:273.00px;font-size:14.6px;color:#7a7a7a;font-weight:bold;letter-spacing:0.036px;left:692.50px;">VETURIS</span>
<span class="t" style="top:244.00px;font-size:14.6px;color:#fff;font-weight:bold;letter-spacing:0.151px;left:951.00px;">Datos de Confir<u>m</u>ación Reserva</span>
<span class="t" style="top:304.00px;font-size:14.6px;color:#000;letter-spacing:0.047px;left:752.50px;">Stock de Talonarios</span>
<span class="t" style="top:303.00px;font-size:14.6px;color:#000;font-weight:bold;letter-spacing:0.094px;left:908.50px;">N - No Gestionar Stock</span>
<span class="t" style="top:331.00px;font-size:14.6px;color:#000;letter-spacing:0.019px;left:560.00px;">Forma Pago</span>
<span class="t" style="top:336.00px;font-size:14.6px;color:#000;letter-spacing:-0.100px;left:684.50px;">Fecha Prepago</span>
<span class="t" style="top:337.00px;font-size:14.6px;color:#000;letter-spacing:-0.009px;left:901.00px;">Tipo de Servicio para Estadística</span>
<span class="t" style="top:360.00px;font-size:14.6px;color:#000;font-weight:bold;letter-spacing:0.016px;left:562.50px;-webkit-text-stroke:0.3px #000;">Prepago</span>
<span class="t" style="top:360.00px;font-size:14.6px;color:#000;letter-spacing:-0.230px;left:688.00px;">15/03/2026</span>
<span class="t" style="top:393.00px;font-size:14.6px;color:#000;letter-spacing:-0.038px;left:558.00px;">Pagadero por</span>
<span class="t" style="top:391.00px;font-size:14.6px;color:#000;font-weight:bold;letter-spacing:-0.027px;left:686.50px;">Ofimática TSS S.L</span>
<span class="t" style="top:436.00px;font-size:15px;color:#cfdde6;font-weight:bold;letter-spacing:-0.032px;left:788.00px;"><u>V</u>aloración de la Reserva</span>
<span class="t" style="top:473.00px;font-size:14.6px;color:#000;letter-spacing:-0.035px;left:557.50px;">%Comisión</span>
<span class="t" style="top:471.00px;font-size:14.6px;color:#000;right:515.50px;">0,00</span>
<span class="t" style="top:473.00px;font-size:14.6px;color:#e6f2fa;letter-spacing:0.086px;left:1043.00px;"><u>D</u>esglose de Precios</span>
<span class="t" style="top:499.00px;font-size:12.3px;color:#000;letter-spacing:-0.023px;left:920.00px;">Aplicar como Descuento en negativo</span>
<span class="t" style="top:514.00px;font-size:14.6px;color:#000;letter-spacing:-0.014px;left:690.50px;">Comisionable</span>
<span class="t" style="top:515.00px;font-size:14.6px;color:#000;letter-spacing:-0.008px;left:810.00px;">No Comision.</span>
<span class="t" style="top:515.00px;font-size:14.6px;color:#000;letter-spacing:-0.098px;left:915.50px;">Gast.Gestión</span>
<span class="t" style="top:515.00px;font-size:14.6px;color:#000;letter-spacing:0.059px;left:1037.50px;">Total Reserva</span>
<span class="t" style="top:536.00px;font-size:14.6px;color:#000;letter-spacing:-0.069px;left:620.50px;">Venta</span>
<span class="t" style="top:573.00px;font-size:14.6px;color:#000;letter-spacing:0.096px;left:616.50px;">Costes</span>
<span class="t" style="top:539.00px;font-size:14.6px;color:#000;right:428.50px;">300,00</span>
<span class="t" style="top:539.00px;font-size:14.6px;color:#fff;left:802.00px;">0</span>
<span class="t" style="top:539.00px;font-size:14.6px;color:#000;right:199.50px;">10,00</span>
<span class="t" style="top:539.00px;font-size:14.6px;color:#4a4a4a;font-weight:bold;right:69.00px;">310,00</span>
<span class="t" style="top:569.00px;font-size:14.6px;color:#000;right:428.50px;">250,00</span>
<span class="t" style="top:569.00px;font-size:14.6px;color:#000;right:308.50px;">0,00</span>
<span class="t" style="top:569.00px;font-size:14.6px;color:#4a4a4a;font-weight:bold;right:69.00px;">250,00</span>
<span class="t" style="top:625.00px;font-size:14.6px;color:#000;letter-spacing:-0.340px;left:557.50px;">Imp.Uatp</span>
<span class="t" style="top:625.00px;font-size:14.6px;color:#000;right:501.50px;">0,00</span>
<span class="t" style="top:629.00px;font-size:14.6px;color:#000;left:725.00px;"><u>P</u>ago Directo</span>
<span class="t" style="top:660.00px;font-size:14.6px;color:#000;letter-spacing:-0.135px;left:557.50px;">Clave Rappel</span>
<span class="t" style="top:659.00px;font-size:14.6px;color:#000;letter-spacing:-0.017px;left:656.50px;">Ht - Estancias</span>
<span class="t" style="top:637.00px;font-size:14.6px;color:#e6f2fa;letter-spacing:0.189px;left:1061.00px;">Desglosar</span>
<span class="t" style="top:654.00px;font-size:14.6px;color:#e6f2fa;letter-spacing:-0.208px;left:1066.00px;">Tipos <u>I</u>va</span>
</div>
</body></html>
